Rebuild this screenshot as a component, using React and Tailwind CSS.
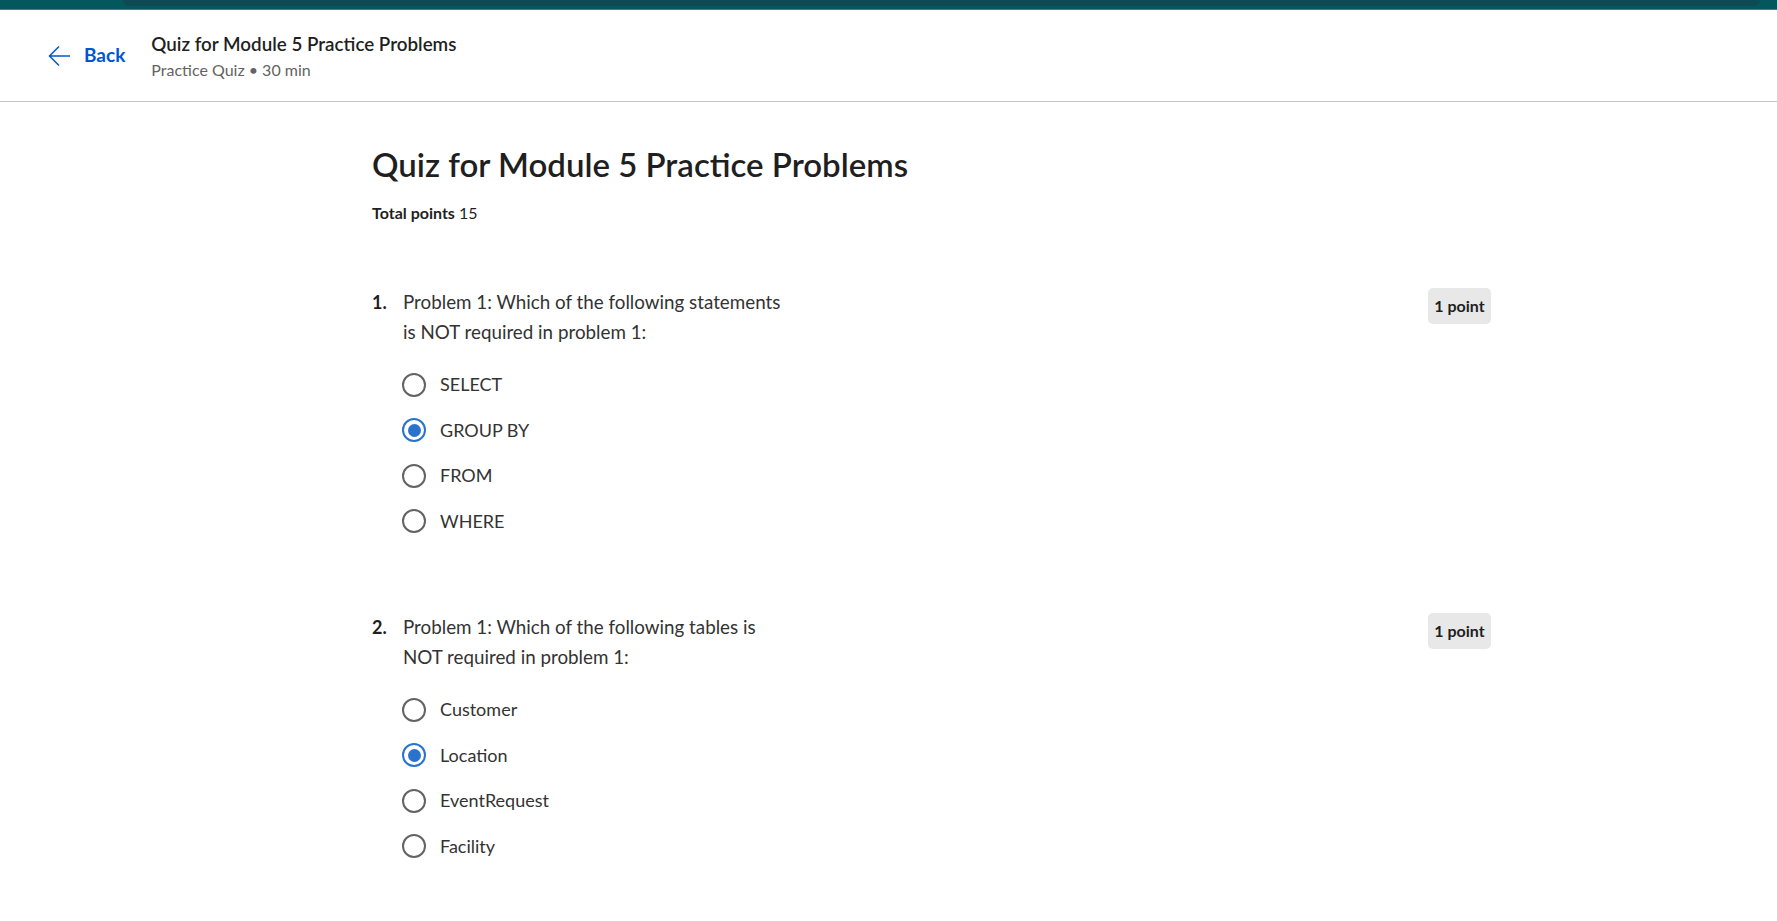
import React from "react";

const Radio = ({ checked }) =>
  checked ? (
    <span className="flex h-[24px] w-[24px] items-center justify-center rounded-full border-[2px] border-[#2a73cc]">
      <span className="h-[13px] w-[13px] rounded-full bg-[#2a73cc]" />
    </span>
  ) : (
    <span className="h-[24px] w-[24px] rounded-full border-[2px] border-[#636363]" />
  );

const Question = ({ num, lines, options, selected }) => (
  <div className="flex items-start justify-between">
    <div>
      <div className="flex leading-[30px]">
        <span className="w-[31px] text-[18px] font-bold text-[#1f1f1f]">{num}.</span>
        <div className="text-[18.8px] text-[#333333]">
          {lines[0]}
          <br />
          {lines[1]}
        </div>
      </div>
      <div className="mt-[15px] flex flex-col">
        {options.map((o, i) => (
          <label key={o} className="flex h-[45.5px] items-center pl-[30px]">
            <Radio checked={i === selected} />
            <span className="ml-[14px] text-[18px] text-[#333333]">{o}</span>
          </label>
        ))}
      </div>
    </div>
    <span className="mt-[1px] flex h-[36px] w-[63px] items-center justify-center rounded-[5px] bg-[#e8e8e8] text-[16px] font-bold text-[#1f1f1f]">
      1 point
    </span>
  </div>
);

export default function App() {
  return (
    <div
      className="min-h-screen bg-white"
      style={{ fontFamily: "Lato, 'Noto Sans', sans-serif" }}
    >
      <div className="relative h-[10px] bg-[#05575e]">
        <div className="absolute left-[123px] right-[17px] top-0 h-[6px] rounded-b-[8px] bg-[#0d4a53]" />
        <div className="absolute bottom-0 left-0 right-0 h-[1px] bg-[#3a8383]" />
      </div>
      <header className="flex h-[92px] items-center border-b border-[#c6c6c6] pl-[48px]">
        <button className="flex items-center text-[#0056d2]">
          <svg width="23" height="22" viewBox="0 0 23 22" fill="none" stroke="currentColor" strokeWidth="1.5">
            <path d="M22 11H1.5M11 1.5L1.5 11L11 20.5" />
          </svg>
          <span className="ml-[13px] text-[19px] font-bold">Back</span>
        </button>
        <div className="ml-[26px] mt-[2px]">
          <div className="text-[18.8px] font-semibold leading-[27px] text-[#1f1f1f]">
            Quiz for Module 5 Practice Problems
          </div>
          <div className="text-[16px] leading-[26px] text-[#636363]">Practice Quiz • 30 min</div>
        </div>
      </header>
      <main className="ml-[372px] w-[1119px] pb-[60px]">
        <h1 className="mt-[42px] text-[33px] font-semibold leading-[40px] text-[#1f1f1f]">
          Quiz for Module 5 Practice Problems
        </h1>
        <p className="mt-[17px] text-[16px] leading-[24px] text-[#1f1f1f]">
          <span className="font-bold">Total points</span> 15
        </p>
        <div className="mt-[62px]">
          <Question
            num={1}
            lines={["Problem 1: Which of the following statements", "is NOT required in problem 1:"]}
            options={["SELECT", "GROUP BY", "FROM", "WHERE"]}
            selected={1}
          />
        </div>
        <div className="mt-[68px]">
          <Question
            num={2}
            lines={["Problem 1: Which of the following tables is", "NOT required in problem 1:"]}
            options={["Customer", "Location", "EventRequest", "Facility"]}
            selected={1}
          />
        </div>
      </main>
    </div>
  );
}
